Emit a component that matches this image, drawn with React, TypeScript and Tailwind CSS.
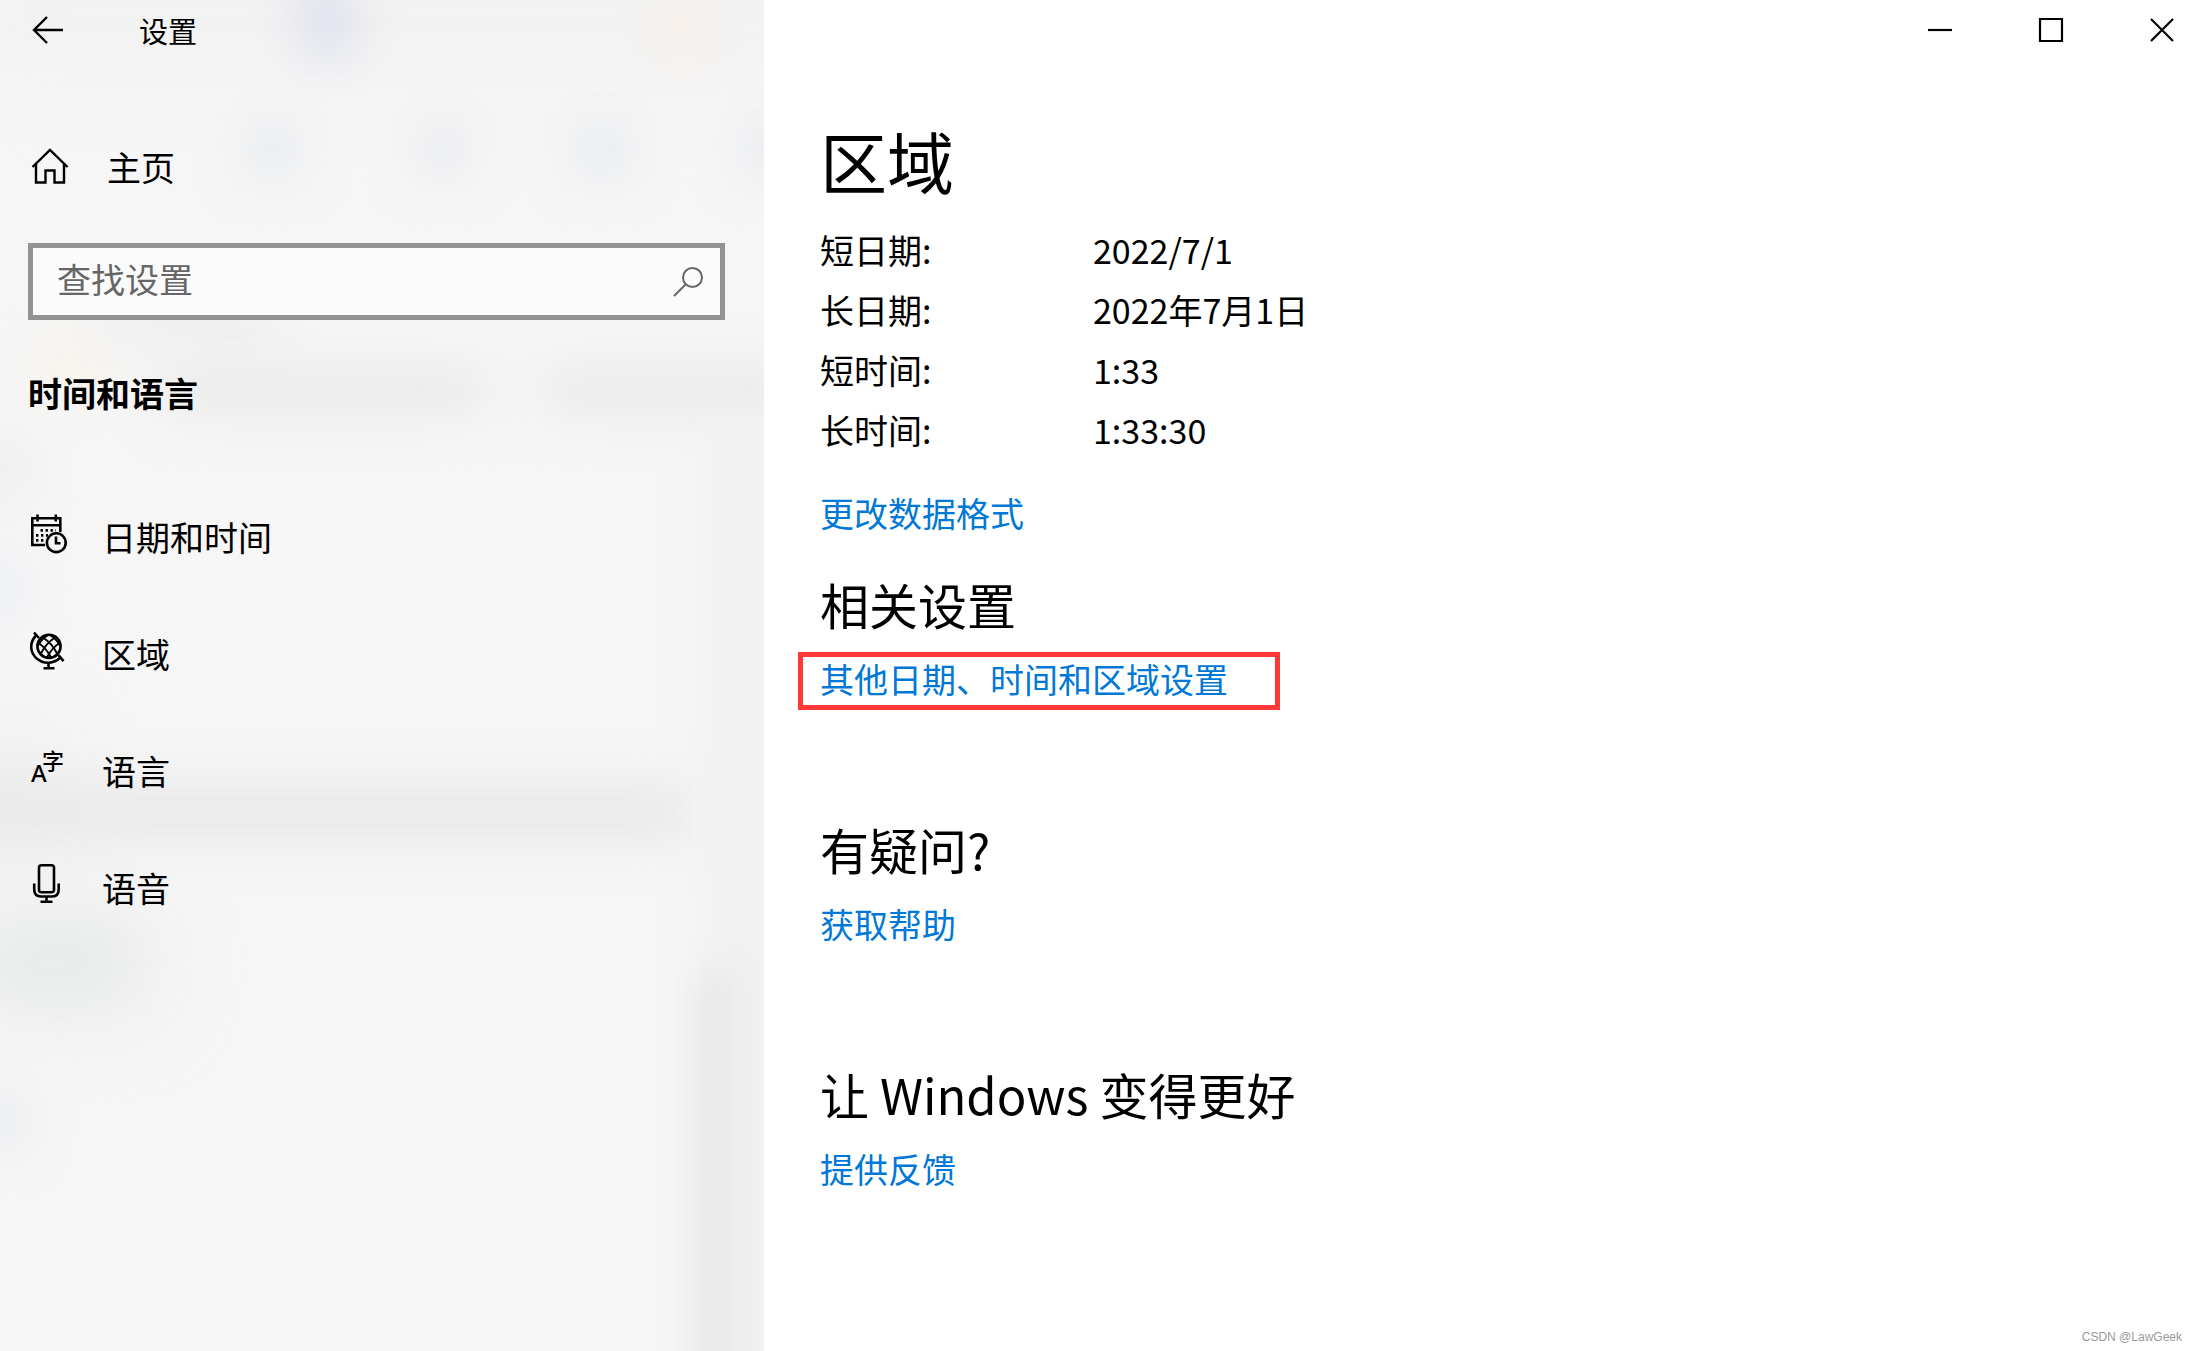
import React, { useState } from 'react';

const CalendarIcon = () => (
  <svg width="40" height="56" viewBox="8 8 40 56" fill="none" stroke="currentColor" strokeWidth="2.6">
    <path d="M25 44H12.3V17.3h28V31M12.3 24.3h28M17.5 13.5v7M35.8 13.5v7" />
    <circle cx="36.3" cy="41.7" r="9.4" />
    <path d="M36 35.5v6.8h4.5" />
    <path d="M20.5 29.4H36M16 34.4h12M16 39.4h8" strokeDasharray="2.4 2.6" />
  </svg>
);

const GlobeIcon = () => (
  <svg width="40" height="56" viewBox="8 5 40 56" fill="none" stroke="currentColor" strokeWidth="2.6">
    <circle cx="29" cy="25.3" r="11.6" />
    <path d="M14 11.5l5 5.5M38.5 34.2l5 6" />
    <path d="M16 14.5C9 22 10 32 17 37.8c7 5.8 16.5 5 23.5-1.3" />
    <path d="M28.5 42v5M23.5 47.3h11" />
    <path d="M23 16.500c6 4 11 9.500 14 16M18.500 22c5.500 3.500 9.500 8.500 12.500 14.500M30 14c4 2.500 7.500 6 10 10.500" strokeWidth="2" />
    <path d="M35 16.500c-6 4-11 9.500-14 16M39.500 22c-5.500 3.500-9.500 8.500-12.500 14.500M28 14c-4 2.500-7.500 6-10 10.500" strokeWidth="2" />
  </svg>
);

const LanguageIcon = () => (
  <svg width="40" height="56" viewBox="8 7 40 56" fill="currentColor">
    <text x="11" y="46" fontSize="24" className="font-['Noto_Sans',sans-serif] font-medium">A</text>
    <text x="22" y="33" fontSize="22" className="font-['Noto_Sans_CJK_SC',sans-serif] font-medium">字</text>
  </svg>
);

const MicIcon = () => (
  <svg width="40" height="56" viewBox="8 8 40 56" fill="none" stroke="currentColor" strokeWidth="2.6">
    <rect x="19" y="13.2" width="15" height="27" rx="2.5" />
    <path d="M14.2 31.5v5.5q0 7.5 7 7.5h11q6.5 0 6.5-7.5v-5.5M26.500 44.500v5M20.500 49.700h12" />
  </svg>
);

const navItems = [
  { icon: CalendarIcon, label: '日期和时间' },
  { icon: GlobeIcon, label: '区域' },
  { icon: LanguageIcon, label: '语言' },
  { icon: MicIcon, label: '语音' },
];

const formats = [
  { label: '短日期:', value: '2022/7/1' },
  { label: '长日期:', value: '2022年7月1日' },
  { label: '短时间:', value: '1:33' },
  { label: '长时间:', value: '1:33:30' },
];

const sections = [
  { title: '相关设置', link: '其他日期、时间和区域设置', marked: true },
  { title: '有疑问?', link: '获取帮助', marked: false },
  { title: '让 Windows 变得更好', link: '提供反馈', marked: false },
];

// Soft shapes showing through the translucent sidebar
const haze = [
  '-left-10 -top-10 h-[100px] w-[860px] bg-[#f1f1f1] blur-2xl',
  'left-[302px] -top-5 h-[80px] w-[50px] bg-[#dcdfee] blur-xl',
  'left-[665px] -top-2 h-[70px] w-[40px] bg-[#f8eee6] blur-xl',
  'left-[245px] top-[125px] h-[50px] w-[56px] bg-[#e5e8ec] blur-xl',
  'left-[415px] top-[125px] h-[50px] w-[56px] bg-[#e7e9ed] blur-xl',
  'left-[572px] top-[125px] h-[50px] w-[60px] bg-[#e5e8ec] blur-xl',
  'left-[742px] top-[125px] h-[50px] w-[60px] bg-[#e5e8ed] blur-xl',
  'left-[100px] top-[305px] h-[30px] w-[180px] bg-[#ebebeb] blur-xl',
  'left-[40px] top-[350px] h-[40px] w-[60px] bg-[#faf2e6] blur-xl',
  'left-[160px] top-[366px] h-[48px] w-[330px] bg-[#eaeaea] blur-xl',
  'left-[540px] top-[366px] h-[48px] w-[280px] bg-[#eaeaea] blur-xl',
  '-left-5 top-[450px] h-[40px] w-[45px] bg-[#e6e6e6] blur-xl',
  '-left-6 top-[550px] h-[80px] w-[40px] bg-[#e9ecf1] blur-xl',
  '-left-8 top-[730px] h-[110px] w-[80px] bg-[#ededed] blur-2xl',
  '-left-10 top-[785px] h-[54px] w-[735px] bg-[#e8e8e8] blur-xl',
  '-left-8 top-[920px] h-[85px] w-[180px] bg-[#e5e7e7] blur-2xl',
  '-left-6 top-[1095px] h-[50px] w-[46px] bg-[#e3e6eb] blur-xl',
  'left-[700px] top-[430px] -bottom-10 w-[120px] bg-[#f1f1f1] blur-lg',
  'left-[698px] top-[970px] -bottom-10 w-[36px] bg-[#e7e7e7] blur-lg',
];

export default function App() {
  const [query, setQuery] = useState('');

  return (
    <div className="flex min-h-screen bg-white text-[34px] leading-[48px] text-black font-['Noto_Sans_CJK_SC',sans-serif]">
      <aside className="relative isolate w-[764px] shrink-0 overflow-hidden bg-[#f6f6f6]">
        <div aria-hidden="true" className="absolute inset-0 -z-10">
          {haze.map((shape) => (
            <div key={shape} className={`absolute rounded-3xl ${shape}`} />
          ))}
        </div>

        <header className="flex h-[60px] items-center gap-[75px] pl-8">
          <button aria-label="返回">
            <svg width="32" height="32" viewBox="0 0 32 32" fill="none" stroke="currentColor" strokeWidth="2.4">
              <path d="M31 16H2M15 3L2 16l13 13" />
            </svg>
          </button>
          <h1 className="text-[29px]">设置</h1>
        </header>

        <div className="px-7">
          <a href="#home" className="mt-[83px] flex h-12 items-center gap-[35px]">
            <svg width="44" height="44" viewBox="0 0 44 44" fill="none" stroke="currentColor" strokeWidth="2.4">
              <path d="M4.500 22L22 5l17.500 17M8 19v18.500h9.500v-12h9v12H36V19" />
            </svg>
            主页
          </a>

          <div className="mt-[52px] mr-[11px] flex h-[77px] items-center border-[5px] border-[#939393] bg-[#fbfbfb] pl-6 pr-4 text-[#666]">
            <input
              type="text"
              aria-label="查找设置"
              value={query}
              onChange={(e) => setQuery(e.target.value)}
              placeholder="查找设置"
              className="min-w-0 flex-1 bg-transparent pb-1.5 outline-none placeholder:text-[#666]"
            />
            <svg width="32" height="32" viewBox="0 0 32 32" fill="none" stroke="currentColor" strokeWidth="2">
              <circle cx="20.500" cy="11.500" r="9.500" />
              <path d="M13.500 18.500L2 30" />
            </svg>
          </div>

          <h2 className="mt-[49px] font-bold">时间和语言</h2>

          <nav className="mt-[61px]">
            {navItems.map((item) => (
              <a key={item.label} href="#settings" className="flex h-[117px] items-center gap-[34px]">
                <item.icon /> {item.label}
              </a>
            ))}
          </nav>
        </div>
      </aside>

      <main className="flex flex-1 flex-col">
        <div className="flex h-[60px] items-center justify-end gap-[85px] pr-[22px]">
          <button aria-label="最小化">
            <svg width="26" height="26" viewBox="0 0 26 26" stroke="currentColor" strokeWidth="2.2"><path d="M1 13h24" /></svg>
          </button>
          <button aria-label="最大化">
            <svg width="26" height="26" viewBox="0 0 26 26" fill="none" stroke="currentColor" strokeWidth="2.2"><path d="M2 2h22v22H2z" /></svg>
          </button>
          <button aria-label="关闭">
            <svg width="26" height="26" viewBox="0 0 26 26" stroke="currentColor" strokeWidth="2.2"><path d="M2 2l22 22M24 2L2 24" /></svg>
          </button>
        </div>

        <div className="pl-14 pt-[60px]">
          <h2 className="text-[67px] leading-[80px]">区域</h2>

          <dl className="mt-5">
            {formats.map((f) => (
              <div key={f.label} className="flex h-[60px] items-center">
                <dt className="w-[273px]">{f.label}</dt>
                <dd>{f.value}</dd>
              </div>
            ))}
          </dl>
          <a href="#formats" className="mt-[29px] block w-fit text-[#0078d7]">更改数据格式</a>

          <div className="mt-9 flex flex-col gap-[108px]">
            {sections.map((s) => (
              <section key={s.title}>
                <h3 className="mb-[17px] text-[49px] leading-[62px]">{s.title}</h3>
                <div className={`-ml-[22px] w-fit border-[5px] pb-1 pl-[17px] pr-[47px] ${s.marked ? 'border-[#ff3838]' : 'border-transparent'}`}>
                  <a href="#related" className="block leading-[44px] text-[#0078d7]">{s.link}</a>
                </div>
              </section>
            ))}
          </div>
        </div>

        <footer className="mt-auto pb-1 pr-[15px] text-right text-xs leading-5 text-[#999] font-['Liberation_Sans',sans-serif]">
          CSDN @LawGeek
        </footer>
      </main>
    </div>
  );
}
